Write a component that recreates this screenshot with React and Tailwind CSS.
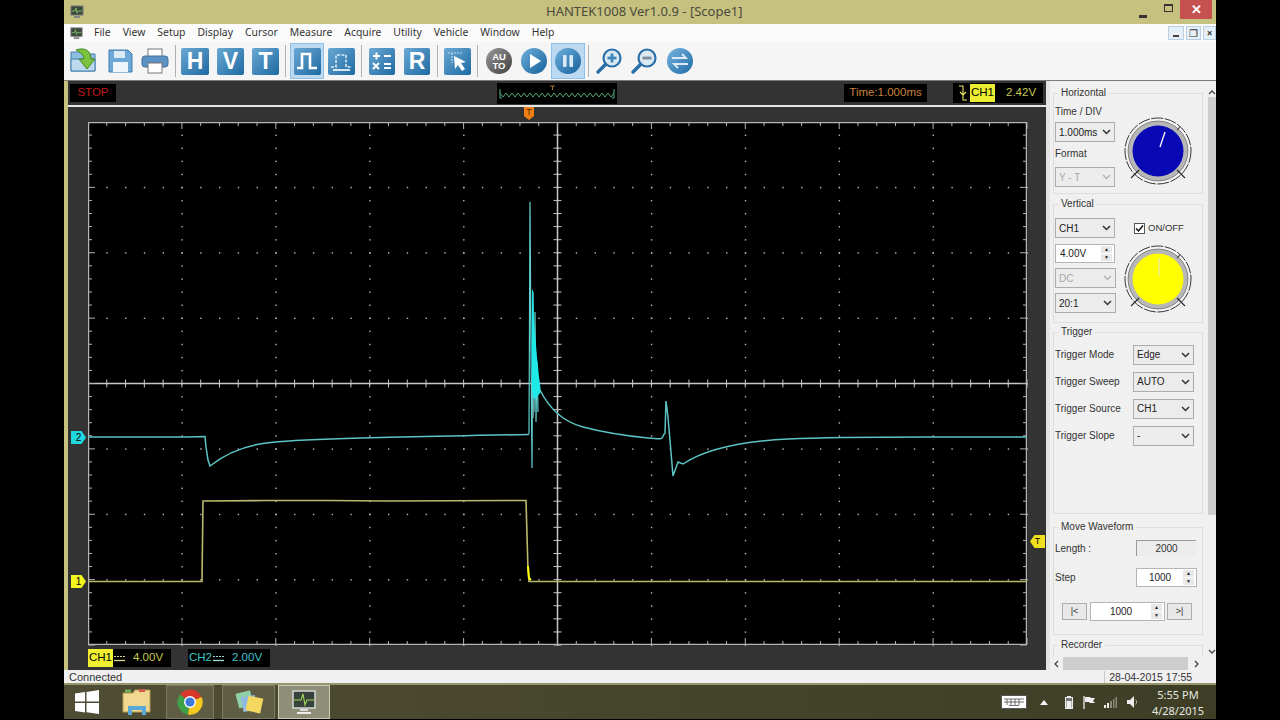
import React from 'react';

// plot geometry, matches the graticule in the picture
const W = 939;
const H = 523;
const DX = W / 50;
const DY = H / 40;

const range = (n) => Array.from({ length: n }, (_, i) => i);

const CH2_LEFT = 'M0 315L60 315L100 315L117 314.500L118 325L120 338L122 344C132 336 150 326 172 322S250 316 441 312.500';
const CH2_SPIKE = 'M441 312L442 80L443 230L444 346L445 170L446 290L447 190L448 300L449 240L450 290';
const CH2_DECAY = 'M452 268C462 288 476 300 495 305S540 314 560 316S572 316 577 311L578 279L580 295L585 354L590 340L595 342C610 332 640 320 700 317S800 315 939 315';
const CH1 = '0,459.5 114,459.5 115,379 180,378.5 240,378.5 300,379 438,378.5 440,448 441,459.5 445,459.5 939,459.5';

function Plot() {
  return (
    <svg width={W + 1} height={H + 1} className="block bg-black">
      {/* dots */}
      {range(51).map((i) =>
        range(7).map((j) => (
          <rect key={`h${i}-${j}`} x={i * DX - 0.5} y={((j + 1) * H) / 8 - 0.5} width="1.4" height="1.4" fill="#b9b9b9" />
        ))
      )}
      {range(41).map((j) =>
        range(9).map((i) => (
          <rect key={`v${i}-${j}`} x={((i + 1) * W) / 10 - 0.5} y={j * DY - 0.5} width="1.4" height="1.4" fill="#b9b9b9" />
        ))
      )}
      {/* centre cross */}
      <line x1="0" x2={W} y1={H / 2} y2={H / 2} stroke="#c8c8c8" strokeWidth="1.5" />
      <line x1={W / 2} x2={W / 2} y1="0" y2={H} stroke="#c8c8c8" strokeWidth="1.5" />
      {range(51).map((i) => (
        <line key={`c${i}`} x1={i * DX} x2={i * DX} y1={H / 2 - 4} y2={H / 2 + 4} stroke="#c8c8c8" />
      ))}
      {range(41).map((j) => (
        <line key={`d${j}`} x1={W / 2 - 4} x2={W / 2 + 4} y1={j * DY} y2={j * DY} stroke="#c8c8c8" />
      ))}
      {/* border ticks */}
      {range(51).map((i) => {
        const len = i % 5 === 0 ? 7 : 4;
        return (
          <g key={`t${i}`} stroke="#b5b5b5">
            <line x1={i * DX} x2={i * DX} y1="0" y2={len} />
            <line x1={i * DX} x2={i * DX} y1={H - len} y2={H} />
          </g>
        );
      })}
      {range(41).map((j) => {
        const len = j % 5 === 0 ? 7 : 4;
        return (
          <g key={`u${j}`} stroke="#b5b5b5">
            <line x1="0" x2={len} y1={j * DY} y2={j * DY} />
            <line x1={W - len} x2={W} y1={j * DY} y2={j * DY} />
          </g>
        );
      })}
      <rect x="0.5" y="0.5" width={W - 1} height={H - 1} fill="none" stroke="#b5b5b5" strokeWidth="1.5" />
      {/* traces */}
      <polyline points={CH1} fill="none" stroke="#b9b96e" strokeWidth="1.6" />
      <polyline points="440,444 441,456 443,458" fill="none" stroke="#ffff00" strokeWidth="2" />
      <path d={CH2_LEFT} fill="none" stroke="#5cc4c4" strokeWidth="1.5" />
      <path d={CH2_SPIKE} fill="none" stroke="#62d0d0" strokeWidth="1.2" />
      <polygon points="444,168 445,168 446,200 449,235 451,255 453,270 446,278 444,270 443.5,220" fill="#1fe8e8" />
      <polyline points="446,278 445,296" fill="none" stroke="#6a9a9a" strokeWidth="1.4" />
      <path d={CH2_DECAY} fill="none" stroke="#5cc4c4" strokeWidth="1.5" />
    </svg>
  );
}

function Marker({ className, children }) {
  return (
    <div className={`absolute flex h-[13px] w-[15px] items-center justify-center text-[10px] leading-none text-black [clip-path:polygon(0_0,70%_0,100%_50%,70%_100%,0_100%)] ${className}`}>
      {children}
    </div>
  );
}

function Chevron({ disabled }) {
  return (
    <svg width="9" height="6" viewBox="0 0 9 6" className="shrink-0">
      <path d="M1 1l3.5 3.5L8 1" fill="none" stroke={disabled ? '#b4b4b4' : '#333'} strokeWidth="1.5" />
    </svg>
  );
}

function Select({ value, disabled, className = 'w-[60px]' }) {
  return (
    <div className={`flex h-[20px] items-center justify-between border border-[#acacac] bg-[#ececec] pl-[3px] pr-[3px] text-[10px] ${disabled ? 'text-[#a8a8a8]' : 'text-[#222]'} ${className}`}>
      <span>{value}</span>
      <Chevron disabled={disabled} />
    </div>
  );
}

function Spin({ value, center, className }) {
  return (
    <div className={`flex h-[19px] items-center border border-[#b4b4b4] bg-white pr-[2px] text-[10px] text-[#222] ${className}`}>
      <span className={`flex-1 ${center ? 'text-center' : 'pl-[4px]'}`}>{value}</span>
      <div className="flex w-[11px] flex-col gap-px">
        <div className="flex h-[7px] items-center justify-center bg-[#e8e8e8] text-[5px] leading-none">▲</div>
        <div className="flex h-[7px] items-center justify-center bg-[#e8e8e8] text-[5px] leading-none">▼</div>
      </div>
    </div>
  );
}

function Group({ title, className, children }) {
  return (
    <fieldset className={`w-[150px] shrink-0 border border-[#dedede] ${className}`}>
      <legend className="ml-[4px] px-[3px] text-[10px] leading-[12px] text-[#333]">{title}</legend>
      {children}
    </fieldset>
  );
}

function Knob({ color, needle }) {
  return (
    <svg width="70" height="70" viewBox="0 0 70 70" className="shrink-0">
      <circle cx="35" cy="35" r="33" fill="none" stroke="#222" strokeWidth="0.9" strokeDasharray="12 1.5" />
      <circle cx="35" cy="35" r="31" fill="#fff" />
      <circle cx="35" cy="35" r="30" fill="#b7b7b7" stroke="#444" strokeWidth="0.6" />
      <circle cx="35" cy="35" r="25.5" fill={color} />
      <line x1="54" y1="14" x2="57" y2="11" stroke="#555" strokeWidth="1.2" />
      <line x1="16" y1="54" x2="8" y2="62" stroke="#222" strokeWidth="1.1" />
      <line x1="54" y1="54" x2="62" y2="62" stroke="#222" strokeWidth="1.1" />
      {needle}
    </svg>
  );
}

function Tile({ children, className = 'w-[28px]' }) {
  return (
    <div className={`flex h-[27px] items-center justify-center rounded-[2px] bg-linear-to-br from-[#6aa9d4] to-[#1a6aa3] text-[23px] font-bold leading-none text-white ${className}`}>
      {children}
    </div>
  );
}

function Sep({ className }) {
  return <div className={`h-[32px] w-px bg-[#b0b0b0] ${className}`} />;
}

function Round({ from, to, children, className }) {
  return (
    <svg width="28" height="28" viewBox="0 0 28 28" className={className}>
      <defs>
        <linearGradient id={`g${from.slice(1)}`} x1="0" y1="0" x2="1" y2="1">
          <stop offset="0" stopColor={from} />
          <stop offset="1" stopColor={to} />
        </linearGradient>
      </defs>
      <circle cx="14" cy="14" r="13" fill={`url(#g${from.slice(1)})`} />
      {children}
    </svg>
  );
}

function Magnifier({ minus, className }) {
  return (
    <svg width="28" height="28" viewBox="0 0 28 28" className={className}>
      <line x1="3" y1="25" x2="11" y2="17" stroke="#2a6fa8" strokeWidth="3.5" strokeLinecap="round" />
      <circle cx="17" cy="11" r="8.5" fill="#dbe9f3" stroke="#2a6fa8" strokeWidth="2.2" />
      <rect x="12.5" y="9.6" width="9" height="2.8" fill={minus ? '#7b8b98' : '#3f86bb'} />
      {!minus && <rect x="15.6" y="6.5" width="2.8" height="9" fill="#3f86bb" />}
    </svg>
  );
}

function Toolbar() {
  return (
    <div className="flex h-[38px] items-center bg-[#f5f5f5] pl-[6px]">
      {/* open */}
      <svg width="30" height="28" viewBox="0 0 30 28">
        <path d="M1 5h9l2 2h13v17H1z" fill="#8fbde0" stroke="#3f7fb0" />
        <path d="M1 12h24v12H1z" fill="#bcd9ee" stroke="#3f7fb0" />
        <path d="M6 3c8-3 15 0 15 9h4l-8 10-8-10h5c0-4-4-7-8-9z" fill="#7cc23f" stroke="#3f8a1f" />
      </svg>
      {/* save */}
      <svg width="25" height="24" viewBox="0 0 25 24" className="ml-[8px]">
        <path d="M1 1h19l4 4v18H1z" fill="#6ea8d8" stroke="#3f7fb0" />
        <rect x="6" y="2" width="11" height="7" fill="#dcebf6" />
        <rect x="5" y="13" width="15" height="10" fill="#eef5fb" />
      </svg>
      {/* print */}
      <svg width="28" height="26" viewBox="0 0 28 26" className="ml-[8px]">
        <rect x="7" y="1" width="14" height="8" fill="#fff" stroke="#777" />
        <rect x="1" y="8" width="26" height="11" rx="3" fill="#5d93c4" stroke="#44709a" />
        <rect x="7" y="15" width="14" height="10" fill="#fff" stroke="#777" />
      </svg>
      <Sep className="ml-[6px]" />
      <Tile className="ml-[5px] w-[28px]">H</Tile>
      <Tile className="ml-[8px] w-[27px]">V</Tile>
      <Tile className="ml-[8px] w-[27px]">T</Tile>
      <Sep className="ml-[6px]" />
      <div className="ml-[4px] flex h-[36px] w-[34px] items-center justify-center border border-[#8fc0ea] bg-[#bcd9f2]">
        <Tile className="w-[27px]">
          <svg width="23" height="21" viewBox="0 0 23 21">
            <path d="M1 17h5V3h8v14h7" fill="none" stroke="#fff" strokeWidth="2.6" />
          </svg>
        </Tile>
      </div>
      <Tile className="ml-[4px] w-[27px]">
        <svg width="23" height="21" viewBox="0 0 23 21">
          <path d="M1 16h5V4h10v12h6" fill="none" stroke="#dcebf6" strokeWidth="1.6" strokeDasharray="3 1.5" />
          <path d="M3 19h17" stroke="#fff" strokeWidth="1.6" />
        </svg>
      </Tile>
      <Sep className="ml-[6px]" />
      <Tile className="ml-[7px] w-[26px]">
        <svg width="22" height="20" viewBox="0 0 22 20" stroke="#fff" strokeWidth="2">
          <path d="M2 5h7M5.500 1.500v7M13 5h7M2 12l6 6M8 12l-6 6M13 13h7M13 17h7" />
        </svg>
      </Tile>
      <Tile className="ml-[9px] w-[26px]">R</Tile>
      <Sep className="ml-[7px]" />
      <Tile className="ml-[6px] w-[27px]">
        <svg width="23" height="22" viewBox="0 0 23 22">
          <path d="M2 3h15M6 3v10" stroke="#bcd9ee" strokeWidth="1.2" strokeDasharray="2 1" fill="none" />
          <path d="M8 6l12 6-5 1 4 6-3 2-4-6-3 4z" fill="#fff" />
        </svg>
      </Tile>
      <Sep className="ml-[6px]" />
      <Round from="#9a9a9a" to="#3f3f3f" className="ml-[7px]">
        <text x="14" y="13" textAnchor="middle" fontSize="9.5" fontWeight="700" fill="#fff" fontFamily="Liberation Sans">AU</text>
        <text x="14" y="22" textAnchor="middle" fontSize="9.5" fontWeight="700" fill="#fff" fontFamily="Liberation Sans">TO</text>
      </Round>
      <Round from="#6fb0dc" to="#15619b" className="ml-[7px]">
        <path d="M10 7l11 7-11 7z" fill="#fff" />
      </Round>
      <div className="ml-[3px] flex h-[36px] w-[34px] items-center justify-center border border-[#8fc0ea] bg-[#bcd9f2]">
        <Round from="#6fb1dd" to="#15609a">
          <rect x="9" y="8" width="3.6" height="12" rx="1" fill="#dcebf6" />
          <rect x="15.400" y="8" width="3.6" height="12" rx="1" fill="#dcebf6" />
        </Round>
      </div>
      <Sep className="ml-[3px]" />
      <Magnifier className="ml-[6px]" />
      <Magnifier minus className="ml-[7px]" />
      <Round from="#79b5df" to="#1d6aa5" className="ml-[8px]">
        <path d="M6 11h14l-4-4M22 17H8l4 4" fill="none" stroke="#dcebf6" strokeWidth="1.800" />
      </Round>
    </div>
  );
}

function ScopeIcon({ size = 14 }) {
  return (
    <svg width={size} height={size} viewBox="0 0 14 14">
      <rect x="1" y="1" width="12" height="9" fill="#3c4a3c" stroke="#777" />
      <path d="M2 6h3l1-3 1 5 1-2h4" fill="none" stroke="#8fd06a" strokeWidth="0.8" />
      <rect x="4" y="11" width="6" height="2" fill="#888" />
    </svg>
  );
}

function Coupling({ color }) {
  return (
    <svg width="11" height="7" viewBox="0 0 11 7" className="ml-px">
      <path d="M0 1.500h11" stroke={color} strokeDasharray="2 1" />
      <path d="M0 5.500h11" stroke={color} strokeWidth="1.300" />
    </svg>
  );
}

function Scope() {
  return (
    <div className="flex h-full w-[978px] flex-col bg-[#333333]">
      {/* top strip */}
      <div className="flex h-[24px] items-center pl-[2px] text-[11.5px]">
        <div className="flex h-[18px] w-[46px] items-center justify-center bg-black text-[#c01818]">STOP</div>
        <div className="relative ml-[381px] h-[21px] w-[120px] bg-black">
          <svg width="120" height="21" viewBox="0 0 120 21" className="block">
            <path d="M3 6v9h2M117 6v9h-2" fill="none" stroke="#4fb08a" />
            <path d={`M3 10${range(19).map(() => 'l3 4l3-4').join('')}`} fill="none" stroke="#55a870" strokeWidth="1" />
            <path d="M53 3h5M55.500 3v4" stroke="#a8703a" />
          </svg>
        </div>
        <div className="ml-[227px] flex h-[18px] w-[83px] items-center justify-center bg-black text-[#c9803c]">Time:1.000ms</div>
        <div className="ml-[26px] flex h-[20px] w-[90px] items-center bg-black pl-[5px]">
          <svg width="10" height="16" viewBox="0 0 10 16">
            <path d="M1 1h4v14h4M2 7l3 3 3-3" fill="none" stroke="#e8e860" strokeWidth="1.100" />
          </svg>
          <span className="ml-[2px] bg-[#ecec30] px-px text-black">CH1</span>
          <span className="ml-[11px] text-[#c8c850]">2.42V</span>
        </div>
      </div>
      <div className="h-[2px] bg-[#e6e6e6]" />
      {/* plot */}
      <div className="relative pl-[20px] pt-[15px]">
        <Plot />
        <div className="absolute left-[456px] top-0 flex h-[13px] w-[10px] items-start justify-center bg-[#f07f14] text-[9px] leading-[10px] text-[#5a2c00] [clip-path:polygon(0_0,100%_0,100%_70%,50%_100%,0_70%)]">T</div>
        <Marker className="left-[3px] top-[324px] bg-[#20d8e0]">2</Marker>
        <Marker className="left-[3px] top-[468px] bg-[#f5f520]">1</Marker>
        <div className="absolute left-[962px] top-[428px] flex h-[13px] w-[15px] items-center justify-center bg-[#f0e020] text-[9px] leading-none text-black [clip-path:polygon(30%_0,100%_0,100%_100%,30%_100%,0_50%)]">T</div>
      </div>
      {/* channel readouts */}
      <div className="flex pl-[20px] pt-[3px] text-[11.5px]">
        <div className="flex h-[18px] w-[83px] items-center bg-black">
          <span className="bg-[#f0f030] px-px text-black">CH1</span>
          <Coupling color="#d8d890" />
          <span className="ml-[8px] text-[#c8c850]">4.00V</span>
        </div>
        <div className="ml-[17px] flex h-[18px] w-[82px] items-center bg-black pl-px">
          <span className="text-[#3fc4c8]">CH2</span>
          <Coupling color="#9ad8d8" />
          <span className="ml-[8px] text-[#3fc4c8]">2.00V</span>
        </div>
      </div>
    </div>
  );
}

function TriggerRow({ label, value }) {
  return (
    <div className="flex h-[27px] items-center justify-between pl-[1px] pr-[8px]">
      <span>{label}</span>
      <Select value={value} className="w-[61px]" />
    </div>
  );
}

function ControlPanel() {
  return (
    <div className="flex h-full w-[166px] flex-col bg-[#f0f0f0]">
      <div className="flex min-h-0 flex-1">
        <div className="flex w-[155px] flex-col overflow-hidden pl-[3px] pt-[6px] text-[10px] text-[#333]">
          <Group title="Horizontal" className="h-[107px]">
            <div className="flex pl-[1px]">
              <div className="w-[61px]">
                <div className="mt-[7px] leading-[12px]">Time / DIV</div>
                <Select value="1.000ms" className="mt-[4px] w-[60px]" />
                <div className="mt-[6px] leading-[12px]">Format</div>
                <Select value="Y - T" disabled className="mt-[7px] w-[60px]" />
              </div>
              <div className="ml-[7px] mt-[17px]">
                <Knob
                  color="#0808b4"
                  needle={<line x1="37" y1="31" x2="42" y2="16" stroke="#fff" strokeWidth="1.300" />}
                />
              </div>
            </div>
          </Group>
          <Group title="Vertical" className="mt-[4px] h-[125px]">
            <div className="flex pl-[1px]">
              <div className="w-[61px] pt-[8px]">
                <Select value="CH1" />
                <Spin value="4.00V" className="mt-[6px] w-[60px]" />
                <Select value="DC" disabled className="mt-[5px]" />
                <Select value="20:1" className="mt-[5px]" />
              </div>
              <div className="ml-[7px] flex flex-col">
                <div className="ml-[11px] mt-[11px] flex items-center text-[9.5px]">
                  <div className="flex h-[11px] w-[11px] items-center justify-center border border-[#555] bg-white">
                    <svg width="9" height="9" viewBox="0 0 9 9">
                      <path d="M1 4.500l2.500 2.500L8 1.500" fill="none" stroke="#111" strokeWidth="1.500" />
                    </svg>
                  </div>
                  <span className="ml-[3px]">ON/OFF</span>
                </div>
                <div className="mt-[9px]">
                  <Knob
                    color="#ffff00"
                    needle={<line x1="36" y1="32" x2="36" y2="14" stroke="#f2ee70" strokeWidth="2" />}
                  />
                </div>
              </div>
            </div>
          </Group>
          <Group title="Trigger" className="mt-[3px] h-[188px]">
            <div className="pt-[3px]">
              <TriggerRow label="Trigger Mode" value="Edge" />
              <TriggerRow label="Trigger Sweep" value="AUTO" />
              <TriggerRow label="Trigger Source" value="CH1" />
              <TriggerRow label="Trigger Slope" value="-" />
            </div>
          </Group>
          <Group title="Move Waveform" className="mt-[7px] h-[114px]">
            <div className="mt-[4px] flex h-[18px] items-center justify-between pl-[1px] pr-[6px] pt-[4px]">
              <span>Length :</span>
              <div className="flex h-[16px] w-[60px] items-center justify-center border-l border-t border-[#9a9a9a] bg-[#ececec]">2000</div>
            </div>
            <div className="mt-[13px] flex items-center justify-between pl-[1px] pr-[5px]">
              <span>Step</span>
              <Spin value="1000" center className="w-[61px]" />
            </div>
            <div className="mt-[15px] flex items-center pl-[8px]">
              <div className="flex h-[17px] w-[25px] items-center justify-center border border-[#acacac] bg-[#e8e8e8] text-[9px]">|&lt;</div>
              <Spin value="1000" center className="ml-[3px] w-[75px]" />
              <div className="ml-[2px] flex h-[17px] w-[25px] items-center justify-center border border-[#acacac] bg-[#e8e8e8] text-[9px]">&gt;|</div>
            </div>
          </Group>
          <Group title="Recorder" className="mt-[4px] h-[40px] shrink-0" />
        </div>
        {/* vertical scrollbar */}
        <div className="flex w-[11px] flex-col pl-[3px] pt-[6px]">
          <div className="flex h-[10px] items-center justify-center">
            <svg width="8" height="5" viewBox="0 0 8 5"><path d="M1 4l3-3 3 3" fill="none" stroke="#444" strokeWidth="1.300" /></svg>
          </div>
          <div className="h-[418px] bg-[#cdcdcd]" />
          <div className="mt-auto flex h-[12px] items-center justify-center">
            <svg width="8" height="5" viewBox="0 0 8 5"><path d="M1 1l3 3 3-3" fill="none" stroke="#444" strokeWidth="1.300" /></svg>
          </div>
        </div>
      </div>
      {/* horizontal scrollbar */}
      <div className="flex h-[13px] w-[155px] items-center">
        <div className="flex w-[13px] justify-center">
          <svg width="5" height="8" viewBox="0 0 5 8"><path d="M4 1L1 4l3 3" fill="none" stroke="#444" strokeWidth="1.300" /></svg>
        </div>
        <div className="h-full w-[125px] bg-[#cdcdcd]" />
        <div className="flex w-[17px] justify-center">
          <svg width="5" height="8" viewBox="0 0 5 8"><path d="M1 1l3 3-3 3" fill="none" stroke="#444" strokeWidth="1.300" /></svg>
        </div>
      </div>
    </div>
  );
}

function TaskButton({ active, className, children }) {
  return (
    <div className={`flex h-[34px] items-center justify-center border ${active ? 'border-[#c8c8b8] bg-[#8f8e76]' : 'border-[#7d7c62] bg-[#5f5e45]'} ${className}`}>
      {children}
    </div>
  );
}

function Taskbar() {
  return (
    <div className="flex h-[36px] items-center border-t-2 border-[#96946a] bg-linear-to-r from-[#4f4d34] to-[#3d3e25] pr-[6px] text-white">
      <svg width="24" height="24" viewBox="0 0 24 24" className="ml-[11px]">
        <path d="M0 3.500l10-1.400v9.400H0zM11.500 1.900L24 0v11.500H11.500zM0 13h10v9.400L0 21zM11.500 13H24v11l-12.500-1.800z" fill="#fff" />
      </svg>
      {/* explorer */}
      <svg width="30" height="28" viewBox="0 0 30 28" className="ml-[23px]">
        <path d="M1 5h10l2-3h15v22H1z" fill="#f0d890" stroke="#b89a50" />
        <rect x="3" y="1.500" width="6" height="3" fill="#6fae5a" />
        <rect x="17" y="1" width="6" height="3" fill="#d05a4a" />
        <path d="M6 27v-9h18v9h-4v-5H10v5z" fill="#5aa8d8" />
      </svg>
      <TaskButton className="ml-[14px] w-[48px]">
        <svg width="26" height="26" viewBox="0 0 26 26">
          <path d="M13 13L3 5.500A12.500 12.500 0 0 1 24.500 8z" fill="#d8382c" />
          <path d="M13 13L3 5.500A12.500 12.500 0 0 0 11 25.500z" fill="#3fa045" />
          <path d="M13 13L24.500 8A12.500 12.500 0 0 1 11 25.500z" fill="#f4c81e" />
          <circle cx="13" cy="13" r="6" fill="#fff" />
          <circle cx="13" cy="13" r="4.600" fill="#3c78d8" />
        </svg>
      </TaskButton>
      <TaskButton className="ml-[8px] w-[53px]">
        <svg width="30" height="26" viewBox="0 0 30 26">
          <rect x="3" y="3" width="15" height="15" fill="#8fd0a8" transform="rotate(-15 10 10)" />
          <rect x="8" y="7" width="14" height="15" fill="#8fb8e0" transform="rotate(-10 15 14)" />
          <rect x="13" y="8" width="15" height="15" fill="#f4d860" transform="rotate(12 20 15)" />
        </svg>
      </TaskButton>
      <TaskButton active className="ml-[3px] w-[52px]">
        <svg width="26" height="28" viewBox="0 0 26 28">
          <rect x="2" y="3" width="22" height="17" fill="#37433a" stroke="#d8d8d8" strokeWidth="1.500" />
          <path d="M3 12h7l2-6 2 11 2-5h7" fill="none" stroke="#a4d85a" strokeWidth="1.100" />
          <rect x="9" y="21" width="8" height="2" fill="#ddd" />
          <rect x="6" y="24" width="14" height="2" fill="#eee" />
        </svg>
      </TaskButton>
      {/* tray */}
      <svg width="26" height="14" viewBox="0 0 26 14" className="ml-auto">
        <rect x="0.500" y="0.500" width="25" height="13" fill="#fff" stroke="#555" />
        <path d="M3 4h20M3 7h20M6 4v6M10 4v6M14 4v6M18 4v6M8 10.500h10" stroke="#333" strokeWidth="0.700" fill="none" />
      </svg>
      <svg width="8" height="5" viewBox="0 0 8 5" className="ml-[13px]"><path d="M0 5l4-5 4 5z" fill="#f4f4f4" /></svg>
      <svg width="8" height="13" viewBox="0 0 8 13" className="ml-[17px]">
        <rect x="0.500" y="1.500" width="7" height="11" fill="#777" stroke="#eee" />
        <rect x="2" y="0" width="4" height="1.500" fill="#eee" />
        <rect x="1.500" y="5" width="5" height="7" fill="#eee" />
      </svg>
      <svg width="12" height="13" viewBox="0 0 12 13" className="ml-[10px]">
        <path d="M1 0v13" stroke="#eee" strokeWidth="1.300" />
        <path d="M2 1h5l1 1h4l-2 3 2 2H7L6 6H2z" fill="#eee" />
      </svg>
      <svg width="13" height="11" viewBox="0 0 13 11" className="ml-[9px]">
        <path d="M0 8h2v3H0zM3 6h2v5H3z" fill="#eee" />
        <path d="M6 4h2v7H6zM9 2h1.500v9H9zM11.500 0H13v11h-1.500z" fill="#8a8a78" />
      </svg>
      <svg width="11" height="12" viewBox="0 0 11 12" className="ml-[10px]">
        <path d="M0 4h3l4-4v12L3 8H0z" fill="#eee" />
        <path d="M8.500 3.500c1.500 1.500 1.500 3.500 0 5" fill="none" stroke="#aaa" />
      </svg>
      <div className="ml-[8px] w-[64px] pt-[1px] text-center font-['Noto_Sans',sans-serif] text-[11px] leading-[16px] text-[#e8e8e0]">
        <div>5:55 PM</div>
        <div>4/28/2015</div>
      </div>
    </div>
  );
}

export default function App() {
  return (
    <div className="flex h-[720px] w-[1280px] justify-center overflow-hidden bg-black font-['Liberation_Sans',Arial,sans-serif]">
      <div className="flex w-[1152px] flex-col">
        {/* title bar */}
        <div className="flex h-[24px] items-center bg-[#c6c17f] pl-[6px] font-['Noto_Sans',sans-serif]">
          <ScopeIcon />
          <div className="flex-1 pl-[462px] text-[13px] text-[#4a4a3c]">HANTEK1008 Ver1.0.9 - [Scope1]</div>
          <svg width="8" height="3" className="mr-[17px] mt-[8px]"><rect width="8" height="3" fill="#333" /></svg>
          <svg width="9" height="8" className="mr-[7px] mb-[8px]"><rect x="0.500" y="0.500" width="8" height="7" fill="none" stroke="#333" strokeWidth="1" /><rect width="9" height="2" fill="#333" /></svg>
          <div className="mb-[5px] mr-[4px] flex h-[19px] w-[32px] items-center justify-center bg-[#c75050] text-[13px] font-bold leading-none text-white">✕</div>
        </div>
        {/* menu */}
        <div className="flex h-[18px] items-center bg-[#fbfbfb] pl-[6px] font-['Noto_Sans',sans-serif] text-[10.4px] text-[#333]">
          <ScopeIcon size={13} />
          <div className="ml-[11px] flex gap-[12px]">
            {['File', 'View', 'Setup', 'Display', 'Cursor', 'Measure', 'Acquire', 'Utility', 'Vehicle', 'Window', 'Help'].map((m) => (
              <span key={m}>{m}</span>
            ))}
          </div>
          <div className="ml-auto flex gap-[2px] text-[10px] leading-none">
            <div className="flex h-[14px] w-[16px] items-end justify-center border border-[#b8cfe4] bg-[#e6eff7] pb-[2px]"><span className="block h-[2px] w-[6px] bg-[#444]" /></div>
            <div className="flex h-[14px] w-[15px] items-center justify-center border border-[#b8cfe4] bg-[#e6eff7]">❐</div>
            <div className="flex h-[14px] w-[13px] items-center justify-center border border-[#b8cfe4] bg-[#e6eff7] font-bold">×</div>
          </div>
        </div>
        <Toolbar />
        {/* main */}
        <div className="flex h-[590px] border-t border-[#7a7a7a]">
          <div className="w-[4px] bg-[#c6c17f]" />
          <Scope />
          <div className="w-[4px] bg-[#e4e4e4]" />
          <ControlPanel />
        </div>
        {/* status */}
        <div className="flex h-[13px] items-end bg-[#f0f0f0] pl-[5px] text-[11px] leading-[12px] text-[#333]">
          <span>Connected</span>
          <span className="ml-[982px] border-l border-[#c8c8c8] pl-[4px] text-[10.5px] leading-[12px]">28-04-2015 17:55</span>
        </div>
        <Taskbar />
      </div>
    </div>
  );
}
